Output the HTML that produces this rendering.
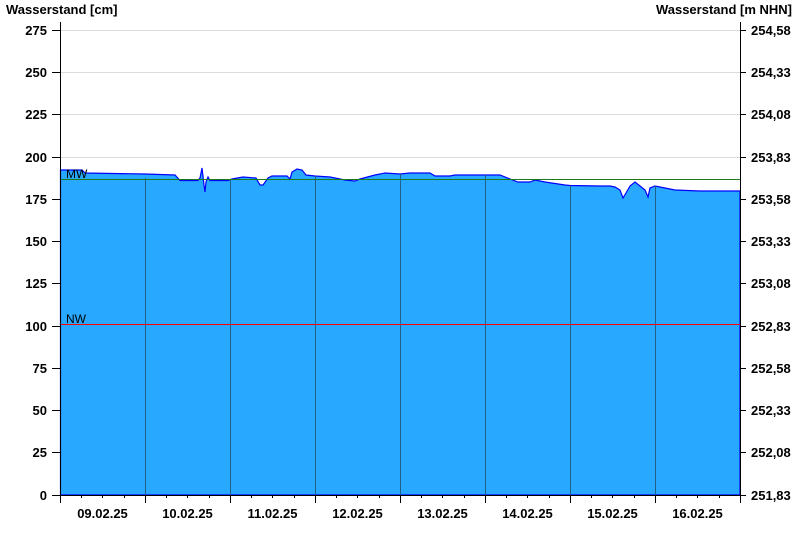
<!DOCTYPE html>
<html><head><style>body{margin:0;background:#fff}svg{display:block}text{font-family:"Liberation Sans",Arial,sans-serif;font-weight:bold;font-size:13px;fill:#000}</style></head><body>
<svg width="800" height="550" viewBox="0 0 800 550">
<text x="6" y="14">Wasserstand [cm]</text>
<text x="792" y="14" text-anchor="end">Wasserstand [m NHN]</text>
<g stroke="#dcdcdc" stroke-width="1">
<line x1="61" x2="740" y1="30.5" y2="30.5"/><line x1="61" x2="740" y1="72.5" y2="72.5"/><line x1="61" x2="740" y1="114.5" y2="114.5"/><line x1="61" x2="740" y1="157.5" y2="157.5"/>
</g>
<path fill="#29a8ff" stroke="#0000ff" stroke-width="1.2" d="M60.5,170 L82,170 L85,173 L145,174 L175,175 L180,180.5 L198,180.5 L200,178 L202,168 L204,185 L205,192 L206,182 L208,177 L210,180.5 L228,180.5 L232,179 L243,177 L256,178 L260,185 L263,185 L268,178 L272,176 L287,176 L290,179 L292,172 L297,169 L302,170 L306,175 L315,176 L330,177 L345,180 L355,181 L360,179 L375,175 L385,173 L400,174 L410,173 L430,173 L435,176 L450,176 L455,175 L500,175 L510,179 L518,182 L530,182 L535,180 L545,182 L565,185 L570,185.5 L600,186 L610,186 L615,187 L620,190 L623,198 L626,193 L630,186 L635,182 L640,186 L645,190 L648,197 L650,188 L655,186 L665,188 L675,190 L700,191 L740,191 L740,495 L60.5,495 Z"/>
<g stroke="#1f5f8a" stroke-width="1">
<line x1="145.5" x2="145.5" y1="178" y2="495"/><line x1="230.5" x2="230.5" y1="180" y2="495"/><line x1="315.5" x2="315.5" y1="176" y2="495"/><line x1="400.5" x2="400.5" y1="174" y2="495"/><line x1="485.5" x2="485.5" y1="175" y2="495"/><line x1="570.5" x2="570.5" y1="186" y2="495"/><line x1="655.5" x2="655.5" y1="186" y2="495"/>
</g>
<line x1="61" x2="740" y1="179.5" y2="179.5" stroke="#1a7a1a" stroke-width="1"/>
<line x1="61" x2="740" y1="324.5" y2="324.5" stroke="#ff0000" stroke-width="1"/>
<text x="66" y="178" style="font-weight:normal;font-size:12px">MW</text>
<text x="66" y="323" style="font-weight:normal;font-size:12px">NW</text>
<g stroke="#000" stroke-width="1">
<line x1="60.5" x2="60.5" y1="22" y2="503"/><line x1="740.5" x2="740.5" y1="22" y2="495"/><line x1="60" x2="741" y1="495.5" y2="495.5"/>
<path d="M52,30.5h8M52,72.5h8M52,114.5h8M52,157.5h8M52,199.5h8M52,241.5h8M52,283.5h8M52,326.5h8M52,368.5h8M52,410.5h8M52,452.5h8M52,495.5h8"/>
<path d="M740,30.5h6M740,72.5h6M740,114.5h6M740,157.5h6M740,199.5h6M740,241.5h6M740,283.5h6M740,326.5h6M740,368.5h6M740,410.5h6M740,452.5h6M740,495.5h6"/>
<path d="M145.5,495v8M230.5,495v8M315.5,495v8M400.5,495v8M485.5,495v8M570.5,495v8M655.5,495v8M740.5,495v8"/>
<path d="M81.5,495v3M102.5,495v3M124.5,495v3M166.5,495v3M187.5,495v3M209.5,495v3M251.5,495v3M272.5,495v3M294.5,495v3M336.5,495v3M357.5,495v3M379.5,495v3M421.5,495v3M442.5,495v3M464.5,495v3M506.5,495v3M527.5,495v3M549.5,495v3M591.5,495v3M612.5,495v3M634.5,495v3M676.5,495v3M697.5,495v3M719.5,495v3"/>
</g>
<g text-anchor="end">
<text x="47" y="35">275</text><text x="47" y="77">250</text><text x="47" y="119">225</text><text x="47" y="162">200</text><text x="47" y="204">175</text><text x="47" y="246">150</text><text x="47" y="288">125</text><text x="47" y="331">100</text><text x="47" y="373">75</text><text x="47" y="415">50</text><text x="47" y="457">25</text><text x="47" y="500">0</text>
</g>
<g>
<text x="751" y="35">254,58</text><text x="751" y="77">254,33</text><text x="751" y="119">254,08</text><text x="751" y="162">253,83</text><text x="751" y="204">253,58</text><text x="751" y="246">253,33</text><text x="751" y="288">253,08</text><text x="751" y="331">252,83</text><text x="751" y="373">252,58</text><text x="751" y="415">252,33</text><text x="751" y="457">252,08</text><text x="751" y="500">251,83</text>
</g>
<g text-anchor="middle">
<text x="102.5" y="518">09.02.25</text><text x="187.5" y="518">10.02.25</text><text x="272.5" y="518">11.02.25</text><text x="357.5" y="518">12.02.25</text><text x="442.5" y="518">13.02.25</text><text x="527.5" y="518">14.02.25</text><text x="612.5" y="518">15.02.25</text><text x="697.5" y="518">16.02.25</text>
</g>
</svg>
</body></html>
